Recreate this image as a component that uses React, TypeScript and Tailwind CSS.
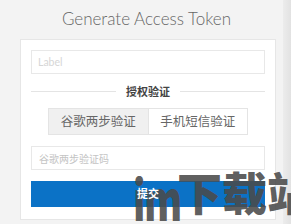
import { useState } from 'react';

const cjk = { fontFamily: '"Noto Sans CJK SC", "Noto Sans", sans-serif' };

export default function App() {
  const [mode, setMode] = useState<'google' | 'sms'>('google');

  return (
    <div className="relative w-[291px] h-[224px] overflow-hidden bg-[#f3f3f3]" style={cjk}>
      <div className="flex">
        <div className="w-[283px] flex flex-col items-center">
          <h1
            className="mt-[6px] ml-[10px] h-[26px] text-[17px] leading-[26px] font-light text-[#666]"
            style={{ fontFamily: 'Lato, "Noto Sans", sans-serif' }}
          >
            Generate Access Token
          </h1>
          <div className="mt-[7px] ml-[13px] w-[256px] bg-white border border-[#e6e6e6] px-[10px] pt-[10px] pb-[12px] flex flex-col">
            <input
              placeholder="Label"
              className="h-[24px] border border-[#e8e8e8] px-[6px] text-[10.5px] placeholder:text-[#d6d6d6] outline-none"
              style={{ fontFamily: 'Lato, sans-serif' }}
            />
            <div className="mt-[10px] flex items-center gap-[10px]">
              <div className="flex-1 h-px bg-[#e4e4e4]" />
              <span className="text-[11px] leading-[14px] font-bold text-[#444]">授权验证</span>
              <div className="flex-1 h-px bg-[#e4e4e4]" />
            </div>
            <div className="mt-[10px] mx-[17px] flex border border-[#e4e4e4] h-[27px]">
              <button
                onClick={() => setMode('google')}
                className={`flex-1 text-[12.5px] text-[#666] ${mode === 'google' ? 'bg-[#f0f0f0]' : 'bg-white'}`}
              >
                谷歌两步验证
              </button>
              <button
                onClick={() => setMode('sms')}
                className={`flex-1 text-[12.5px] text-[#666] border-l border-[#e4e4e4] ${mode === 'sms' ? 'bg-[#f0f0f0]' : 'bg-white'}`}
              >
                手机短信验证
              </button>
            </div>
            <input
              placeholder={mode === 'google' ? '谷歌两步验证码' : '手机短信验证码'}
              className="mt-[11px] h-[24px] border border-[#e8e8e8] px-[7px] text-[10px] placeholder:text-[#c4c4c4] outline-none"
            />
            <button className="mt-[11px] h-[26px] bg-[#0b72c6] text-white text-[11px] font-bold flex items-start justify-center pt-[6px]">
              <span className="relative z-10 leading-[13px]">提交</span>
            </button>
          </div>
        </div>
        <div className="w-[8px] h-[224px] bg-gradient-to-r from-[#ececec] to-[#e2e2e2]" />
      </div>
      {/* site watermark over the bottom-right corner */}
      <div className="absolute left-[133px] top-[176px] pointer-events-none font-black text-[#4a4a4a]/90 whitespace-nowrap">
        <span className="absolute left-0 top-[-5px] text-[54px] leading-[54px] tracking-[-2px] inline-block origin-left scale-x-[0.72]">
          im
        </span>
        <span className="absolute left-[44px] top-[-7px] text-[45px] leading-[45px]">下载站</span>
      </div>
    </div>
  );
}
